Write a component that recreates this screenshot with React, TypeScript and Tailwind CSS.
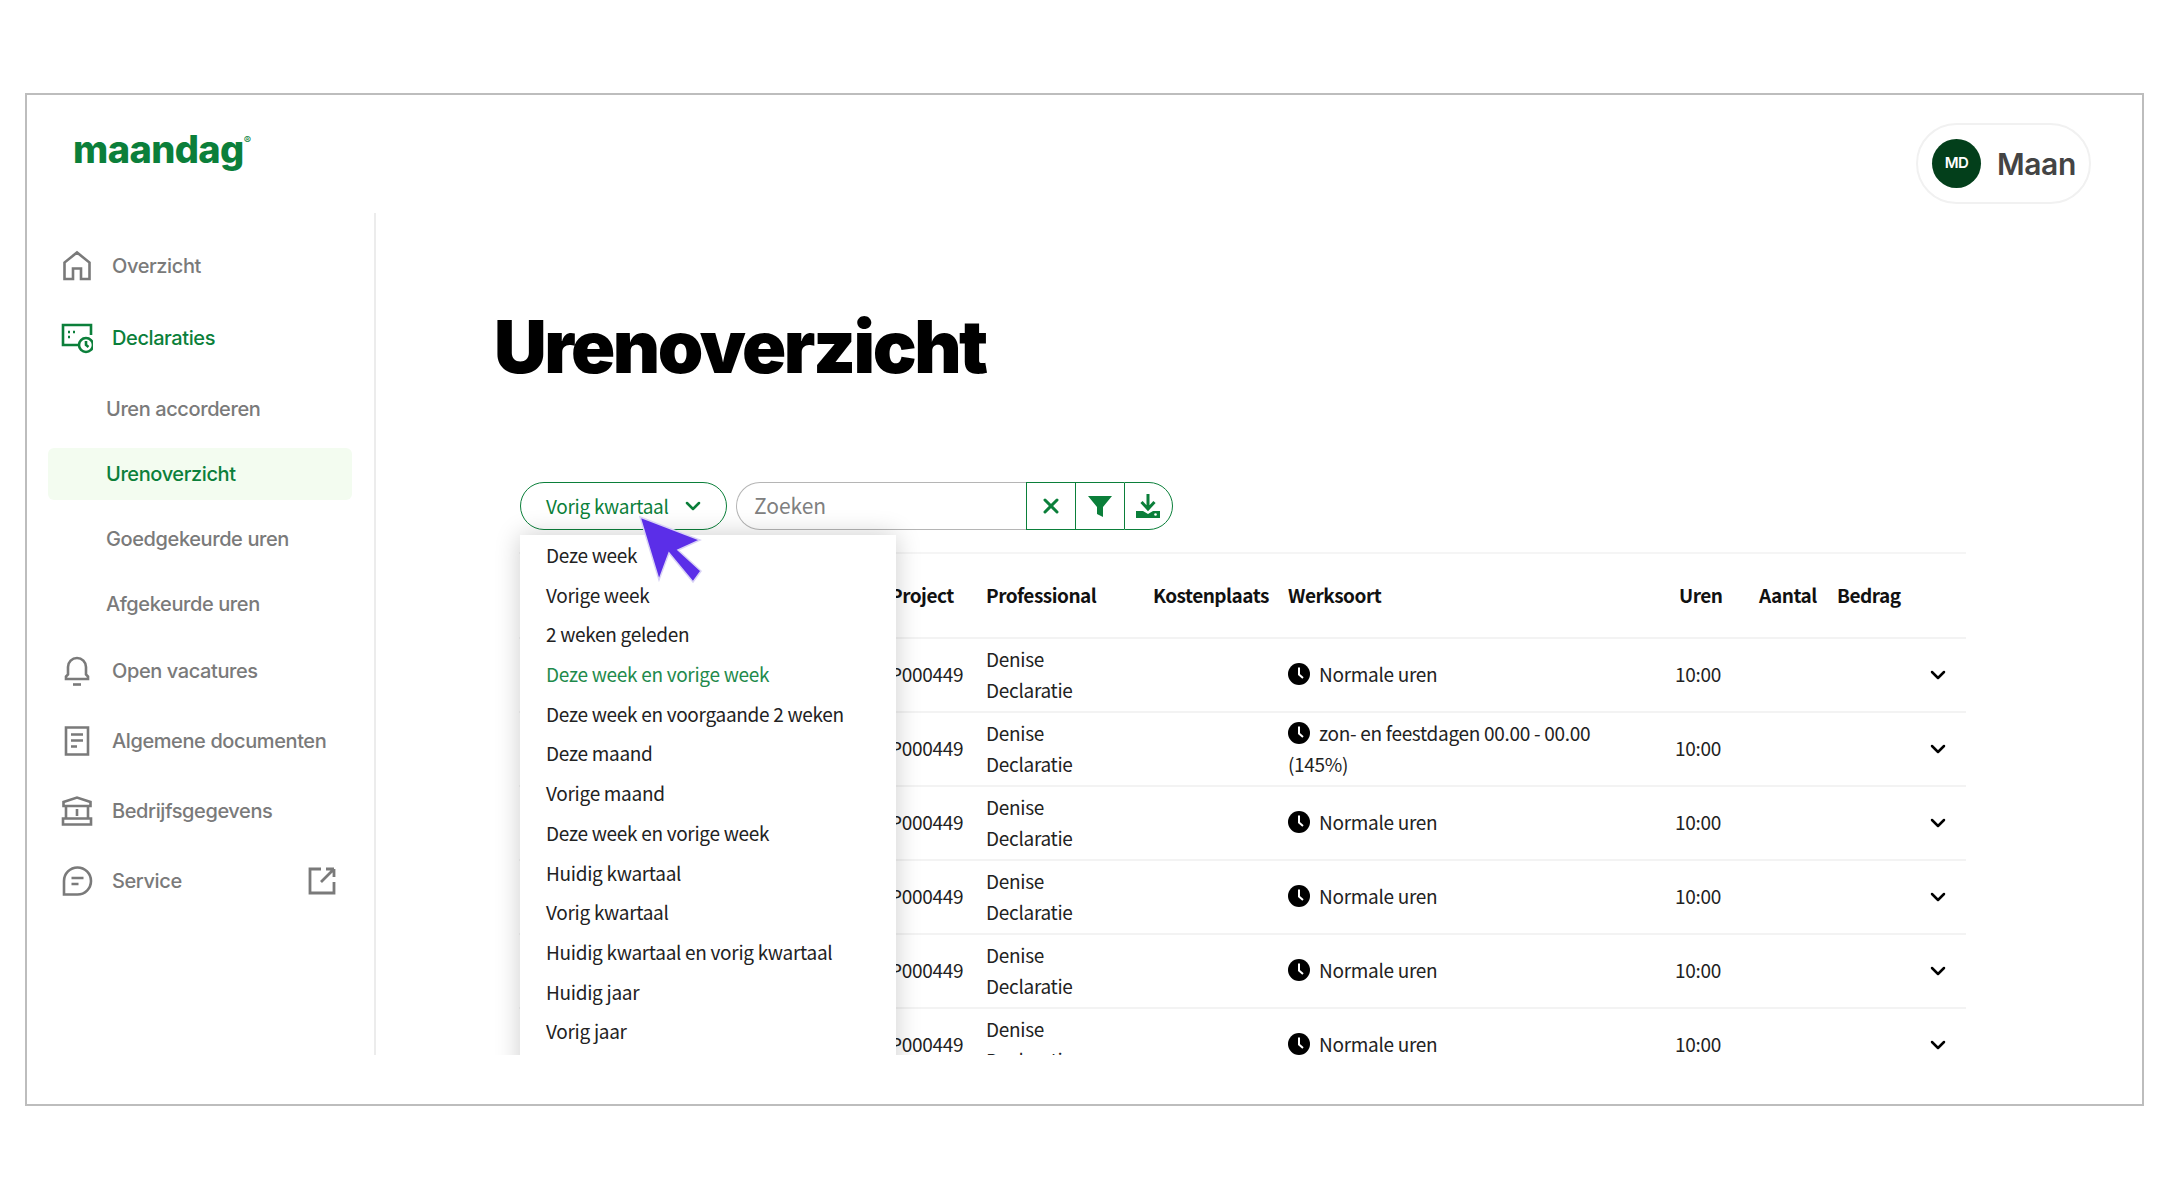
import React from "react";
import { ChevronDown, X } from "lucide-react";

const grey = "#7a7a7a";
const green = "#0b7f3a";

const Ico = ({ children, color = grey }: { children: React.ReactNode; color?: string }) => (
  <svg width="32" height="32" viewBox="0 0 32 32" fill="none" stroke={color} strokeWidth="2.6" className="shrink-0">
    {children}
  </svg>
);

const HomeIcon = () => (
  <Ico>
    <path d="M3.500 29V12.500L16 2.500l12.500 10V29H20V18.500h-8V29z" />
  </Ico>
);
const DeclIcon = () => (
  <Ico color={green}>
    <path d="M18 23H2V3h28v10" />
    <path d="M7 10h2M7 15h2M12 10h2" />
    <circle cx="25" cy="23" r="7" />
    <path d="M25 19v4l2.500 2" />
  </Ico>
);
const BellIcon = () => (
  <Ico>
    <path d="M5 24v-2.500l2-2V12a9 9 0 0 1 18 0v7.500l2 2V24z" />
    <path d="M12 29.500h8" />
  </Ico>
);
const DocIcon = () => (
  <Ico>
    <path d="M5 2.500h22v27H5z" />
    <path d="M10 9.500h12M10 15.500h12M10 21.500h6" />
  </Ico>
);
const BankIcon = () => (
  <Ico>
    <path d="M2.500 11V7L16 2.500 29.500 7v4z" />
    <path d="M5 11v12M27 11v12M16 14v7" />
    <path d="M2 23.500h28v6H2z" />
  </Ico>
);
const ChatIcon = () => (
  <Ico>
    <path d="M3 29.500V16A13.500 13.500 0 1 1 16.500 29.500z" />
    <path d="M10.500 13h12M10.500 19h7" />
  </Ico>
);
const ExtIcon = () => (
  <svg width="28" height="28" viewBox="0 0 28 28" fill="none" stroke={grey} strokeWidth="2.8" className="ml-auto mr-[3px]">
    <path d="M13 2H2v24h24V15" />
    <path d="M26 2v8M26 2h-8M26 2 13 15" />
  </svg>
);

const MainItem = ({ icon, label, active, extra }: { icon: React.ReactNode; label: string; active?: boolean; extra?: React.ReactNode }) => (
  <div className="flex items-center gap-[19px] pl-[34px] pr-[35px] h-[70px]">
    {icon}
    <span className={"text-[20px] font-medium tracking-[-0.4px] " + (active ? "text-[#0b7f3a]" : "text-[#7a7a7a]")}>{label}</span>
    {extra}
  </div>
);

const SubItem = ({ label, active }: { label: string; active?: boolean }) => (
  <div
    className={
      "flex items-center h-[52px] ml-[21px] w-[304px] pl-[58px] rounded-[6px] text-[20px] font-medium tracking-[-0.4px] " +
      (active ? "bg-[#f3fcf0] text-[#0b7f3a]" : "text-[#7a7a7a]")
    }
  >
    {label}
  </div>
);

const Clock = () => (
  <svg width="22" height="22" viewBox="0 0 22 22" className="inline-block align-[-3px] mr-[9px]">
    <circle cx="11" cy="11" r="11" fill="#000" />
    <path d="M11 4.500V11.500l4 3.500" fill="none" stroke="#fff" strokeWidth="2" />
  </svg>
);

const menu = [
  "Deze week",
  "Vorige week",
  "2 weken geleden",
  "Deze week en vorige week",
  "Deze week en voorgaande 2 weken",
  "Deze maand",
  "Vorige maand",
  "Deze week en vorige week",
  "Huidig kwartaal",
  "Vorig kwartaal",
  "Huidig kwartaal en vorig kwartaal",
  "Huidig jaar",
  "Vorig jaar",
];

const rows = [
  "Normale uren",
  "zon- en feestdagen 00.00 - 00.00 (145%)",
  "Normale uren",
  "Normale uren",
  "Normale uren",
  "Normale uren",
];

export default function App() {
  return (
    <div className="w-[2166px] h-[1199px] bg-white pt-[93px] pl-[25px] overflow-hidden" style={{ fontFamily: "Inter, sans-serif" }}>
      <div className="w-[2119px] h-[1013px] border-2 border-[#bdbdbd] flex flex-col">
        <header className="h-[118px] shrink-0 flex justify-between pl-[46px] pr-[51px] pt-[28px]">
          <div className="mt-[2px] text-[#0b7f3a] text-[38px] leading-[48px] font-extrabold tracking-[-0.600px] h-[48px] flex">
            maandag<span className="text-[11px] leading-[30px] font-normal tracking-normal">®</span>
          </div>
          <div className="w-[175px] h-[81px] rounded-full border-2 border-[#f1f1f1] flex items-center pl-[14px] gap-[16px]">
            <div className="w-[49px] h-[49px] rounded-full bg-[#033f1b] text-white text-[15px] font-semibold flex items-center justify-center tracking-[-0.5px]">MD</div>
            <span className="mt-[2px] text-[30px] font-semibold text-[#444] tracking-[-0.4px]">Maan</span>
          </div>
        </header>

        <div className="flex h-[842px]">
          <aside className="w-[349px] shrink-0 border-r-2 border-[#ececec] pt-[18px]">
            <MainItem icon={<HomeIcon />} label="Overzicht" />
            <div className="h-[2px]" />
            <MainItem icon={<DeclIcon />} label="Declaraties" active />
            <div className="mt-[10px] flex flex-col gap-[13px] mb-[6px]">
              <SubItem label="Uren accorderen" />
              <SubItem label="Urenoverzicht" active />
              <SubItem label="Goedgekeurde uren" />
              <SubItem label="Afgekeurde uren" />
            </div>
            <MainItem icon={<BellIcon />} label="Open vacatures" />
            <MainItem icon={<DocIcon />} label="Algemene documenten" />
            <MainItem icon={<BankIcon />} label="Bedrijfsgegevens" />
            <MainItem icon={<ChatIcon />} label="Service" extra={<ExtIcon />} />
          </aside>

          <main className="flex-1 relative overflow-hidden pl-[118px]">
            <h1 className="mt-[90px] text-[73px] leading-[88px] font-black text-black tracking-[-2.500px]">Urenoverzicht</h1>

            <div
              className="ml-[26px] mt-[91px] flex gap-[9px] text-[19px] tracking-[-0.3px] h-[48px]"
              style={{ fontFamily: '"Noto Sans CJK JP", sans-serif' }}
            >
              <div className="w-[207px] h-[48px] rounded-full border-[1.5px] border-[#0b7f3a] flex items-center pl-[25px] gap-[12px] text-[#0b7f3a]">
                <span>Vorig kwartaal</span>
                <ChevronDown size={24} strokeWidth={2.500} />
              </div>
              <div className="w-[437px] h-[48px] flex">
                <div className="w-[290px] rounded-l-full border-[1.5px] border-r-0 border-[#b5b5b5] flex items-center pl-[17px] text-[#808080] text-[21px] tracking-normal">Zoeken</div>
                <div className="w-[50px] border-[1.5px] border-[#0b7f3a] flex items-center justify-center text-[#0b7f3a]">
                  <X size={24} strokeWidth={3} />
                </div>
                <div className="w-[48px] border-y-[1.5px] border-[#0b7f3a] flex items-center justify-center">
                  <svg width="24" height="24" viewBox="0 0 24 24"><path d="M0 2h24L15 13v10l-6-3v-7z" fill={green} /></svg>
                </div>
                <div className="w-[49px] rounded-r-full border-[1.5px] border-[#0b7f3a] flex items-center justify-start pl-[11px]">
                  <svg width="24" height="26" viewBox="0 0 24 26" fill="none">
                    <path d="M12 1v14M5.500 9l6.500 7 6.500-7" stroke={green} strokeWidth="3" />
                    <path d="M0 18h7l5 3 5-3h7v7H0z" fill={green} />
                    <circle cx="19.500" cy="21.500" r="1.300" fill="#fff" />
                  </svg>
                </div>
              </div>
            </div>

            <div className="ml-[25px] w-[1447px] mt-[22px] border-t-2 border-[#f5f5f5] text-[19px] tracking-[-0.3px] leading-[31px] text-[#222]" style={{ fontFamily: '"Noto Sans CJK JP", sans-serif' }}>
              <div className="flex items-center h-[85px] pb-[3px] border-b-2 border-[#f3f3f3] font-semibold text-[#111] tracking-[-0.5px]">
                <span className="w-[371px]" />
                <span className="w-[96px]">Project</span>
                <span className="w-[167px]">Professional</span>
                <span className="w-[135px]">Kostenplaats</span>
                <span className="w-[391px]">Werksoort</span>
                <span className="w-[80px]">Uren</span>
                <span className="w-[78px]">Aantal</span>
                <span>Bedrag</span>
              </div>
              {rows.map((w, i) => (
                <div key={i} className="flex items-center h-[74px] pb-[3px] border-b-2 border-[#f3f3f3]">
                  <span className="w-[371px]" />
                  <span className="w-[96px]">P000449</span>
                  <span className="w-[167px]">Denise<br />Declaratie</span>
                  <span className="w-[135px]" />
                  <span className="w-[387px]"><span className="block w-[340px]"><Clock />{w}</span></span>
                  <span className="w-[251px]">10:00</span>
                  <ChevronDown size={24} strokeWidth={2.500} className="text-black mt-[3px]" />
                </div>
              ))}
            </div>

            <div
              className="absolute left-[144px] top-[322px] w-[376px] h-[600px] bg-white shadow-[0_0_24px_rgba(0,0,0,0.2)] text-[19px] tracking-[-0.3px] text-[#222]"
              style={{ fontFamily: '"Noto Sans CJK JP", sans-serif' }}
            >
              {menu.map((m, i) => (
                <div key={i} className={"pl-[26px] h-[39.700px] leading-[39.700px] whitespace-nowrap " + (i === 3 ? "text-[#1f8a4c]" : "")}>
                  {m}
                </div>
              ))}
            </div>

            <svg width="84" height="84" viewBox="0 0 84 84" className="absolute left-[258px] top-[300px]">
              <path d="M6 4l60 23-22 10 23 21-8 11-24-29-10 27z" fill="#5b2ee8" stroke="#d9d3f5" strokeWidth="1.500" />
            </svg>
          </main>
        </div>
      </div>
    </div>
  );
}
